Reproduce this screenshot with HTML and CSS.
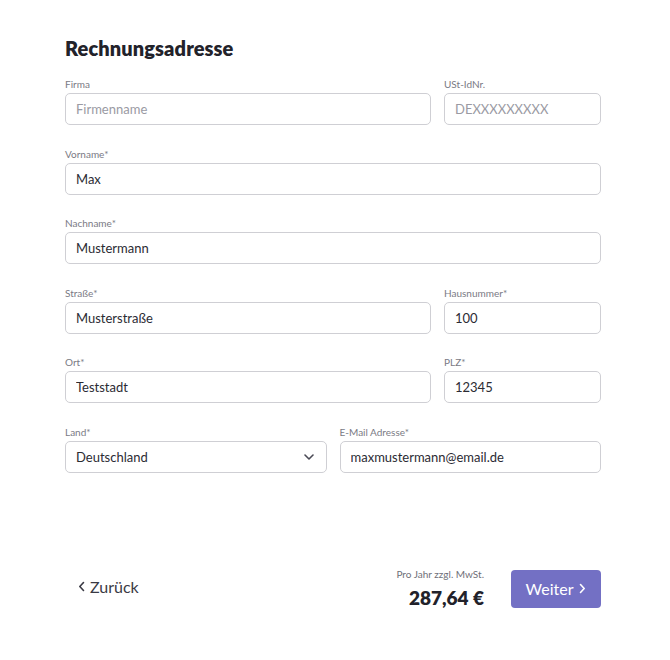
FILE: index.html
```html
<!DOCTYPE html>
<html lang="de">
<head>
<meta charset="utf-8">
<title>Rechnungsadresse</title>
<link rel="stylesheet" href="styles.css">
</head>
<body>
<main class="page">
  <h1 class="title">Rechnungsadresse</h1>
  <form class="form">
    <div class="row row-wide">
      <label class="field"><span class="label">Firma</span><input class="input" placeholder="Firmenname"></label>
      <label class="field"><span class="label">USt-IdNr.</span><input class="input" placeholder="DEXXXXXXXXX"></label>
    </div>
    <div class="row row-one">
      <label class="field"><span class="label">Vorname*</span><input class="input" value="Max"></label>
    </div>
    <div class="row row-one">
      <label class="field"><span class="label">Nachname*</span><input class="input" value="Mustermann"></label>
    </div>
    <div class="row row-wide">
      <label class="field"><span class="label">Straße*</span><input class="input" value="Musterstraße"></label>
      <label class="field"><span class="label">Hausnummer*</span><input class="input" value="100"></label>
    </div>
    <div class="row row-wide">
      <label class="field"><span class="label">Ort*</span><input class="input" value="Teststadt"></label>
      <label class="field"><span class="label">PLZ*</span><input class="input" value="12345"></label>
    </div>
    <div class="row row-half">
      <label class="field"><span class="label">Land*</span>
        <span class="select">
          <span class="select-text">Deutschland</span>
          <svg class="chev" width="10" height="6" viewBox="0 0 10 6"><path d="M1 1l4 4 4-4" fill="none" stroke="#4a4a55" stroke-width="1.6" stroke-linecap="round" stroke-linejoin="round"/></svg>
        </span>
      </label>
      <label class="field"><span class="label">E-Mail Adresse*</span><input class="input" value="maxmustermann@email.de"></label>
    </div>
  </form>
  <footer class="footer">
    <a class="back" href="#"><svg width="7" height="11" viewBox="0 0 7 11"><path d="M5.5 1.5L1.8 5.5l3.7 4" fill="none" stroke="#3a3a44" stroke-width="1.6" stroke-linecap="round" stroke-linejoin="round"/></svg>Zurück</a>
    <div class="summary">
      <div class="price-block">
        <div class="price-note">Pro Jahr zzgl. MwSt.</div>
        <div class="price">287,64 €</div>
      </div>
      <button class="next" type="button">Weiter<svg width="7" height="11" viewBox="0 0 7 11"><path d="M1.5 1.5l3.7 4-3.7 4" fill="none" stroke="#fff" stroke-width="1.6" stroke-linecap="round" stroke-linejoin="round"/></svg></button>
    </div>
  </footer>
</main>
</body>
</html>
```
FILE: styles.css
```css
* { box-sizing: border-box; }
html, body { margin: 0; padding: 0; background: #fff; }
body {
  font-family: "Lato", "Open Sans", sans-serif;
  color: #2b2b33;
}
.page {
  width: 536px;
  margin-left: 65px;
  padding-top: 36px;
}
.title {
  margin: 0;
  font-size: 20px;
  line-height: 24px;
  font-weight: 800;
  color: #22222a;
  letter-spacing: 0.1px;
}
.form {
  margin-top: 18px;
  display: flex;
  flex-direction: column;
  gap: 22.6px;
}
.row { display: grid; gap: 13px; }
.row-wide { grid-template-columns: 1fr 157px; }
.row-one { grid-template-columns: 1fr; }
.row-half { grid-template-columns: 1fr 1fr; }
.field { display: flex; flex-direction: column; }
.label {
  font-size: 10px;
  line-height: 12px;
  color: #7a7a84;
  margin-bottom: 3px;
}
.input, .select {
  height: 32px;
  width: 100%;
  border: 1px solid #cfcfd4;
  border-radius: 5px;
  padding: 0 10px;
  font-family: inherit;
  font-size: 13px;
  color: #2b2b33;
  background: #fff;
  outline: none;
}
.input::placeholder { color: #9a9aa3; opacity: 1; }
.select {
  display: flex;
  align-items: center;
  justify-content: space-between;
  padding-right: 12px;
}
.footer {
  margin-top: 95px;
  display: flex;
  align-items: center;
  justify-content: space-between;
}
.back {
  display: flex;
  align-items: center;
  gap: 5px;
  margin-left: 13px;
  font-size: 16px;
  color: #3a3a44;
  text-decoration: none;
  margin-top: -4px;
}
.summary { display: flex; align-items: center; gap: 27px; }
.price-block { display: flex; flex-direction: column; align-items: flex-end; }
.price-note { font-size: 10px; line-height: 12px; color: #6f6f78; }
.price {
  margin-top: 6px;
  font-size: 19px;
  line-height: 24px;
  font-weight: 800;
  color: #22222a;
}
.next {
  width: 90px;
  height: 38px;
  border: 0;
  border-radius: 4px;
  background: #7370c4;
  color: #fff;
  font-family: inherit;
  font-size: 16px;
  display: flex;
  align-items: center;
  justify-content: center;
  gap: 6px;
  padding: 0;
}
```
